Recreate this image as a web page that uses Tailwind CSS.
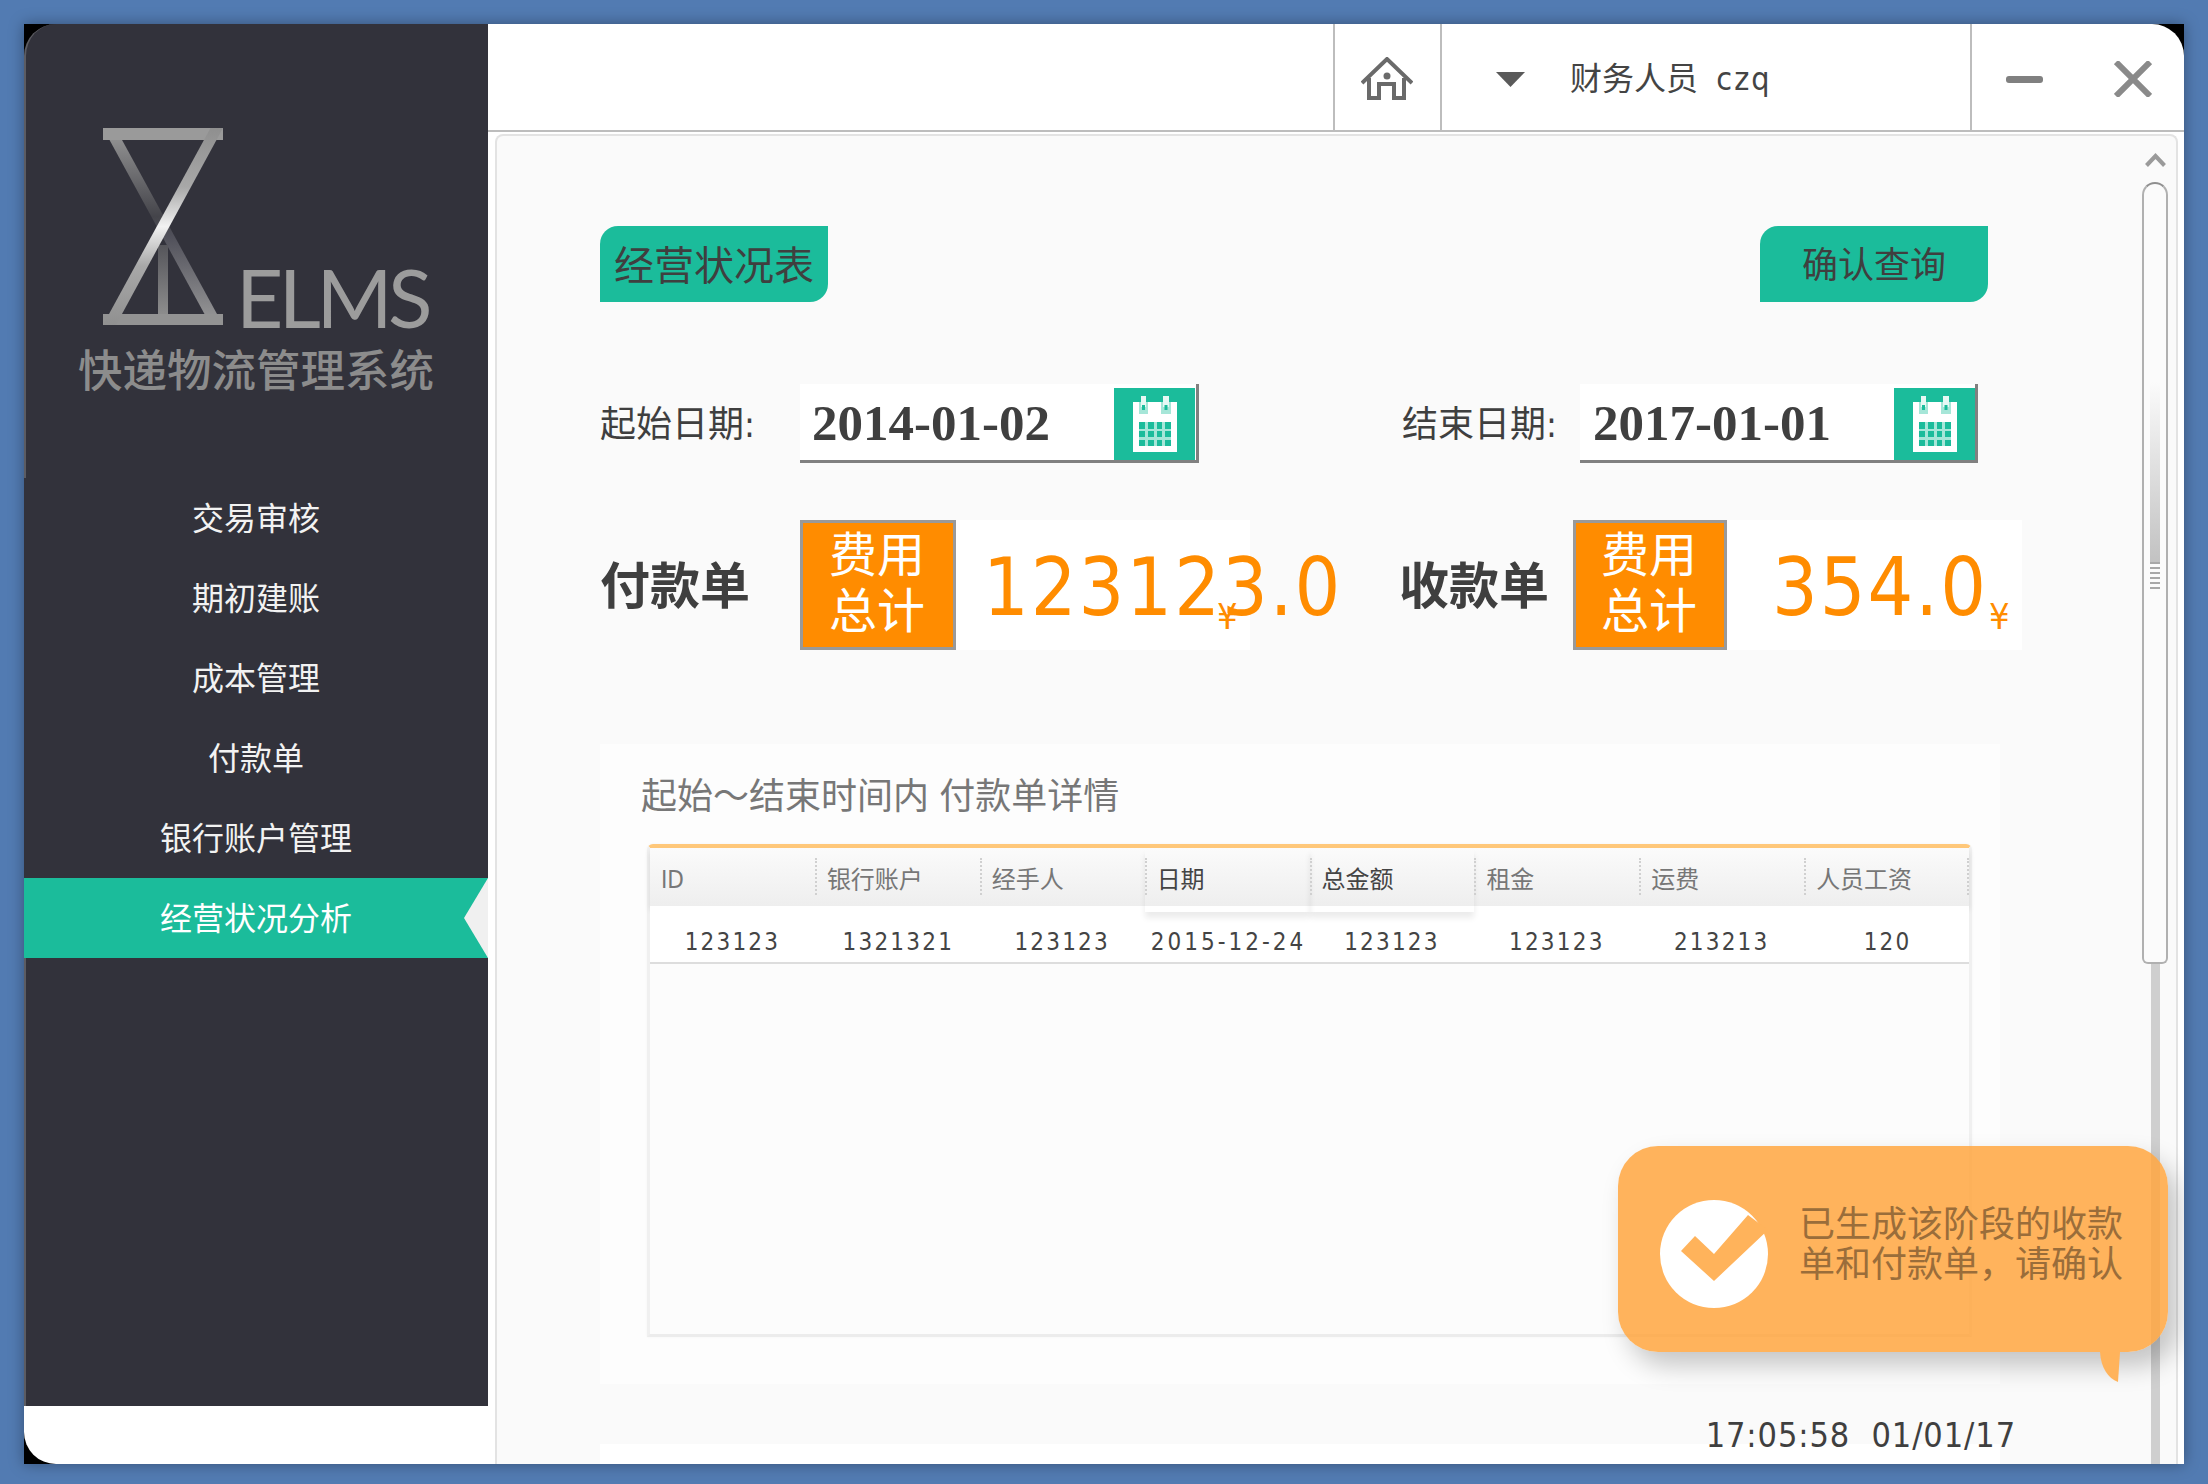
<!DOCTYPE html>
<html lang="zh">
<head>
<meta charset="utf-8">
<script src="https://cdn.jsdelivr.net/npm/@tailwindcss/browser@4"></script>
</head>
<body class="m-0 h-[1484px] w-[2208px] overflow-hidden bg-[#527bb2] font-['DejaVu_Sans_Condensed','Noto_Sans_CJK_SC',sans-serif] text-[#3f3f3f]">
<div class="p-[24px]">
<div class="relative flex h-[1440px] w-[2160px] overflow-hidden bg-black shadow-[0_0_14px_rgba(0,0,0,0.35)]">

  <!-- Sidebar -->
  <aside class="flex w-[464px] shrink-0 flex-col">
    <div class="flex h-[454px] flex-col rounded-tl-[32px] border-l-2 border-[#5c5c62] bg-[#32323b]">
      <svg class="ml-[77px] mt-[104px] h-[197px] w-[120px] shrink-0" viewBox="103 128 120 197">
        <defs>
          <linearGradient id="bright" x1="0" y1="0" x2="0" y2="1">
            <stop offset="0" stop-color="#8f8f8f"/><stop offset="0.3" stop-color="#a8a8a8"/><stop offset="0.5" stop-color="#f2f2f2"/><stop offset="0.7" stop-color="#a8a8a8"/><stop offset="1" stop-color="#909090"/>
          </linearGradient>
          <linearGradient id="dim" x1="0" y1="0" x2="0" y2="1">
            <stop offset="0" stop-color="#9a9a9a"/><stop offset="0.45" stop-color="#44444a"/><stop offset="0.55" stop-color="#50505a"/><stop offset="1" stop-color="#9a9a9a"/>
          </linearGradient>
          <linearGradient id="stem" x1="0" y1="0" x2="0" y2="1">
            <stop offset="0" stop-color="#55555a"/><stop offset="1" stop-color="#8f8f8f"/>
          </linearGradient>
        </defs>
        <polygon points="103,128 115.5,128 223,325 210.5,325" fill="url(#dim)"/>
        <rect x="158" y="245" width="10" height="72" fill="url(#stem)"/>
        <rect x="103" y="128" width="120" height="12" fill="#9a9a9a"/>
        <rect x="103" y="314" width="120" height="11" fill="#939393"/>
        <polygon points="210.5,128 223,128 116,325 103,325" fill="url(#bright)"/>
      </svg>
      <div class="relative h-0">
        <span class="absolute left-[210px] top-[-70px] font-['Lato',sans-serif] text-[82px] leading-none font-normal tracking-[-4.5px] text-[#9c9c9c]">ELMS</span>
      </div>
      <div class="mt-[23px] ml-[-2px] text-center text-[44.5px] leading-[48px] font-medium text-[#8c8c8c]">快递物流管理系统</div>
    </div>
    <nav class="flex flex-col bg-[#32323b] text-center text-[32px] leading-[82px] text-[#f2f2f2]">
      <a class="h-[80px]">交易审核</a>
      <a class="h-[80px]">期初建账</a>
      <a class="h-[80px]">成本管理</a>
      <a class="h-[80px]">付款单</a>
      <a class="h-[80px]">银行账户管理</a>
      <a class="relative h-[80px] bg-[#1bbc9b] text-white">经营状况分析
        <svg class="absolute right-0 top-0 h-[80px] w-[24px]" viewBox="0 0 24 80"><polygon points="24,0 0,40 24,80" fill="#f0f0f0"/></svg>
      </a>
    </nav>
    <div class="h-[448px] border-l-2 border-[#5c5c62] bg-[#32323b]"></div>
    <div class="flex-1 rounded-bl-[32px] bg-white"></div>
  </aside>

  <!-- Main -->
  <main class="flex min-w-0 flex-1 flex-col rounded-tr-[32px] bg-white">
    <header class="flex h-[108px] shrink-0 items-stretch border-b-2 border-[#bdbdbd]">
      <div class="flex-1"></div>
      <div class="flex w-[109px] items-center justify-center border-x-2 border-[#bdbdbd] pt-[4px]">
        <svg class="mr-[2px] h-[44px] w-[52px]" viewBox="0 0 52 44" fill="none" stroke="#6a6a6a" stroke-width="4">
          <path d="M1 26 L26 2 L51 26"/>
          <path d="M8 21 V41 H18 V27 H33 V41 H43 V21"/>
          <circle cx="26" cy="19" r="3.500" fill="#6a6a6a" stroke="none"/>
        </svg>
      </div>
      <div class="flex w-[528px] items-center pt-[4px]">
        <svg class="ml-[54px] h-[15px] w-[29px]" viewBox="0 0 29 15"><polygon points="0,0 29,0 14.5,15" fill="#5a5a5a"/></svg>
        <span class="ml-[45px] text-[32px] leading-none whitespace-pre text-[#444]">财务人员  <span class="tracking-[2px]">czq</span></span>
      </div>
      <div class="flex w-[214px] items-center border-l-2 border-[#bdbdbd] pt-[4px]">
        <span class="ml-[34px] h-[7px] w-[37px] rounded-[3px] bg-[#808080]"></span>
        <svg class="ml-[71px] h-[36px] w-[38px]" viewBox="0 0 38 36" fill="none" stroke="#8a8a8a" stroke-width="6"><path d="M2 1 L36 35 M36 1 L2 35"/></svg>
      </div>
    </header>

    <section class="ml-[7px] mr-[6px] mt-[2px] flex min-h-0 flex-1 rounded-t-[8px] border-2 border-b-0 border-[#e3e3e3] bg-[#fafafa]">
      <!-- page content -->
      <div class="w-[1645px] shrink-0 pl-[103px] pt-[90px]">
        <div class="flex w-[1388px] items-start justify-between">
          <div class="flex h-[76px] w-[228px] items-center justify-center rounded-tl-[18px] rounded-br-[18px] bg-[#1bbc9b] pt-[4px] text-[40px]">经营状况表</div>
          <div class="flex h-[76px] w-[228px] items-center justify-center rounded-tl-[18px] rounded-br-[18px] bg-[#1bbc9b] pt-[3px] text-[36px]">确认查询</div>
        </div>

        <div class="mt-[82px] flex h-[79px] items-center">
          <span class="w-[200px] pt-[3px] text-[36px]">起始日期:</span>
          <div class="flex h-[79px] w-[399px] items-start border-r-[3px] border-b-[3px] border-[#808080] bg-white pt-[4px]">
            <span class="flex-1 pl-[12px] font-['Liberation_Serif',serif] text-[51px] leading-[70px] font-bold">2014-01-02</span>
            <span class="mr-[1px] flex h-[72px] w-[81px] items-center justify-center bg-[#1bbc9b]">
              <svg class="h-[56px] w-[44px]" viewBox="0 -1 44 56">
                <path d="M0 5 H44 V55 H0 Z" fill="#fff"/>
                <rect x="6" y="5" width="9" height="12" fill="#a6e6d8"/><rect x="28" y="5" width="10" height="12" fill="#a6e6d8"/>
                <rect x="8" y="-1" width="5" height="11" fill="#e6f8f4"/><rect x="30" y="-1" width="6" height="11" fill="#e6f8f4"/>
                <rect x="9" y="8" width="3" height="5" fill="#1bbc9b"/><rect x="31.500" y="8" width="3" height="5" fill="#1bbc9b"/>
                <path d="M6 25 H38 V49 H6 Z" fill="#a6e6d8"/>
                <path d="M6 25 H12 V32 H6 Z M15 25 H21 V32 H15 Z M24 25 H29 V32 H24 Z M32 25 H38 V32 H32 Z M6 34 H12 V40 H6 Z M15 34 H21 V40 H15 Z M24 34 H29 V40 H24 Z M32 34 H38 V40 H32 Z M6 43 H12 V49 H6 Z M15 43 H21 V49 H15 Z M24 43 H29 V49 H24 Z M32 43 H38 V49 H32 Z" fill="#1bbc9b"/>
              </svg>
            </span>
          </div>
          <span class="ml-[203px] w-[178px] pt-[3px] text-[36px]">结束日期:</span>
          <div class="flex h-[79px] w-[398px] items-start border-r-[3px] border-b-[3px] border-[#808080] bg-white pt-[4px]">
            <span class="flex-1 pl-[13px] font-['Liberation_Serif',serif] text-[51px] leading-[70px] font-bold">2017-01-01</span>
            <span class="flex h-[72px] w-[81px] items-center justify-center bg-[#1bbc9b]">
              <svg class="h-[56px] w-[44px]" viewBox="0 -1 44 56">
                <path d="M0 5 H44 V55 H0 Z" fill="#fff"/>
                <rect x="6" y="5" width="9" height="12" fill="#a6e6d8"/><rect x="28" y="5" width="10" height="12" fill="#a6e6d8"/>
                <rect x="8" y="-1" width="5" height="11" fill="#e6f8f4"/><rect x="30" y="-1" width="6" height="11" fill="#e6f8f4"/>
                <rect x="9" y="8" width="3" height="5" fill="#1bbc9b"/><rect x="31.500" y="8" width="3" height="5" fill="#1bbc9b"/>
                <path d="M6 25 H38 V49 H6 Z" fill="#a6e6d8"/>
                <path d="M6 25 H12 V32 H6 Z M15 25 H21 V32 H15 Z M24 25 H29 V32 H24 Z M32 25 H38 V32 H32 Z M6 34 H12 V40 H6 Z M15 34 H21 V40 H15 Z M24 34 H29 V40 H24 Z M32 34 H38 V40 H32 Z M6 43 H12 V49 H6 Z M15 43 H21 V49 H15 Z M24 43 H29 V49 H24 Z M32 43 H38 V49 H32 Z" fill="#1bbc9b"/>
              </svg>
            </span>
          </div>
        </div>

        <div class="mt-[57px] flex h-[130px] items-center">
          <span class="w-[200px] pt-[5px] text-[50px] font-bold">付款单</span>
          <div class="flex h-[130px] w-[156px] items-center justify-center border-[3px] border-[#999] bg-[#ff8c00] pb-[5px] pr-[2px] text-center text-[48px] leading-[56px] text-white">费用<br>总计</div>
          <div class="relative flex h-[130px] w-[294px] items-center bg-white pl-[27px] pt-[5px] text-[80px] leading-none tracking-[2px] whitespace-nowrap text-[#ff8c00]">123123.0
            <span class="absolute left-[261px] top-[79px] text-[36px] leading-none tracking-normal">¥</span>
          </div>
          <span class="ml-[149px] w-[174px] pt-[5px] text-[50px] font-bold">收款单</span>
          <div class="flex h-[130px] w-[154px] items-center justify-center border-[3px] border-[#999] bg-[#ff8c00] pb-[5px] pr-[2px] text-center text-[48px] leading-[56px] text-white">费用<br>总计</div>
          <div class="relative flex h-[130px] w-[295px] items-center bg-white pl-[45px] pt-[5px] text-[80px] leading-none tracking-[2px] whitespace-nowrap text-[#ff8c00]">354.0
            <span class="absolute left-[262px] top-[79px] text-[36px] leading-none tracking-normal">¥</span>
          </div>
        </div>

        <div class="mt-[94px] h-[640px] w-[1400px] bg-[#fdfdfd] px-[47px] pt-[28px]">
          <h2 class="ml-[-6px] pt-[1px] text-[36px] leading-[48px] font-normal text-[#777]">起始～结束时间内 付款单详情</h2>
          <div class="mt-[23px] h-[493px] w-[1325px] rounded-t-[6px] border-x-[3px] border-b-[3px] border-t-[4px] border-x-[#f0f0f0] border-b-[#ececec] border-t-[#ffc87a] bg-[#fcfcfc] shadow-[0_0_3px_rgba(0,0,0,0.04)]">
            <div class="grid h-[58px] grid-cols-8 bg-gradient-to-b from-[#fbfbfb] to-[#eeeeee] text-[24px] leading-[64px] text-[#777] shadow-[0_4px_6px_rgba(0,0,0,0.10)]">
              <div class="pl-[11px]">ID</div>
              <div class="relative pl-[12px] before:absolute before:left-0 before:top-[10px] before:h-[37px] before:border-l-2 before:border-dotted before:border-[#d0d0d0]">银行账户</div>
              <div class="relative pl-[12px] before:absolute before:left-0 before:top-[10px] before:h-[37px] before:border-l-2 before:border-dotted before:border-[#d0d0d0]">经手人</div>
              <div class="relative pl-[12px] text-[#444] shadow-[0_6px_6px_rgba(0,0,0,0.08)] before:absolute before:left-0 before:top-[10px] before:h-[37px] before:border-l-2 before:border-dotted before:border-[#d0d0d0]">日期</div>
              <div class="relative pl-[12px] text-[#444] shadow-[0_6px_6px_rgba(0,0,0,0.08)] before:absolute before:left-0 before:top-[10px] before:h-[37px] before:border-l-2 before:border-dotted before:border-[#d0d0d0]">总金额</div>
              <div class="relative pl-[12px] before:absolute before:left-0 before:top-[10px] before:h-[37px] before:border-l-2 before:border-dotted before:border-[#d0d0d0]">租金</div>
              <div class="relative pl-[12px] before:absolute before:left-0 before:top-[10px] before:h-[37px] before:border-l-2 before:border-dotted before:border-[#d0d0d0]">运费</div>
              <div class="relative pl-[12px] before:absolute before:left-0 before:top-[10px] before:h-[37px] before:border-l-2 before:border-dotted before:border-[#d0d0d0] after:absolute after:right-0 after:top-[10px] after:h-[37px] after:border-r-2 after:border-dotted after:border-[#d0d0d0]">人员工资</div>
            </div>
            <div class="grid h-[58px] grid-cols-8 border-b-2 border-[#dddddd] bg-white text-center text-[24px] leading-[73px] tracking-[2.2px] text-[#444]">
              <div>123123</div><div class="pl-[2px]">1321321</div><div>123123</div><div class="pl-[3px] tracking-[3px]">2015-12-24</div><div>123123</div><div>123123</div><div>213213</div><div class="pl-[2px]">120</div>
            </div>
          </div>
        </div>

        <div class="h-[60px] w-[1416px] text-right text-[34px] leading-[102px] tracking-[0.9px] whitespace-pre text-[#3f3f3f]">17:05:58  01/01/17</div>
        <div class="h-[40px] w-[1400px] bg-white"></div>
      </div>

      <!-- scrollbar -->
      <div class="flex w-[26px] shrink-0 flex-col items-center pt-[17px]">
        <svg class="h-[14px] w-[21px] shrink-0" viewBox="0 0 21 14" fill="none" stroke="#9a9a9a" stroke-width="4"><path d="M1.500 12.500 L10.500 3 L19.500 12.500"/></svg>
        <div class="relative mt-[15px] h-[782px] w-[26px] shrink-0 rounded-t-[13px] rounded-b-[6px] border-2 border-[#b0b0b0] border-t-[#8f8f8f] bg-[#fbfbfb]">
          <div class="absolute left-[6px] top-[198px] h-[180px] w-[10px] bg-gradient-to-b from-[#fbfbfb] to-[#c2c2c2]"></div>
          <div class="absolute left-[6px] top-[378px] flex h-[27px] w-[10px] flex-col justify-between">
            <i class="h-[2px] bg-[#a8a8a8]"></i><i class="h-[2px] bg-[#a8a8a8]"></i><i class="h-[2px] bg-[#a8a8a8]"></i><i class="h-[2px] bg-[#a8a8a8]"></i><i class="h-[2px] bg-[#a8a8a8]"></i><i class="h-[2px] bg-[#a8a8a8]"></i>
          </div>
        </div>
        <div class="w-[9px] flex-1 bg-[#cfcfcf]"></div>
      </div>
    </section>
  </main>

  <!-- Toast -->
  <div class="absolute left-[1594px] top-[1122px] flex h-[206px] w-[550px] items-start rounded-[40px] bg-[#ffa63f]/85 shadow-[10px_14px_26px_rgba(0,0,0,0.22)]">
    <svg class="ml-[42px] mt-[54px] h-[108px] w-[108px] shrink-0" viewBox="0 0 108 108">
      <circle cx="54" cy="54" r="54" fill="#fff"/>
      <polygon points="21,51 35,36 54,54 88,15 108,30 54,81" fill="#ffb35b"/>
    </svg>
    <p class="ml-[31px] mt-[59px] w-[330px] text-[36px] leading-[40px] text-[#9a6d3a]">已生成该阶段的收款<br>单和付款单，请确认</p>
    <svg class="absolute left-[482px] top-[206px] h-[30px] w-[20px]" viewBox="0 0 20 30"><path d="M0 0 H20 L18 30 C8 26 1 16 0 0 Z" fill="#ffb35b"/></svg>
  </div>
</div>
</div>
</body>
</html>
